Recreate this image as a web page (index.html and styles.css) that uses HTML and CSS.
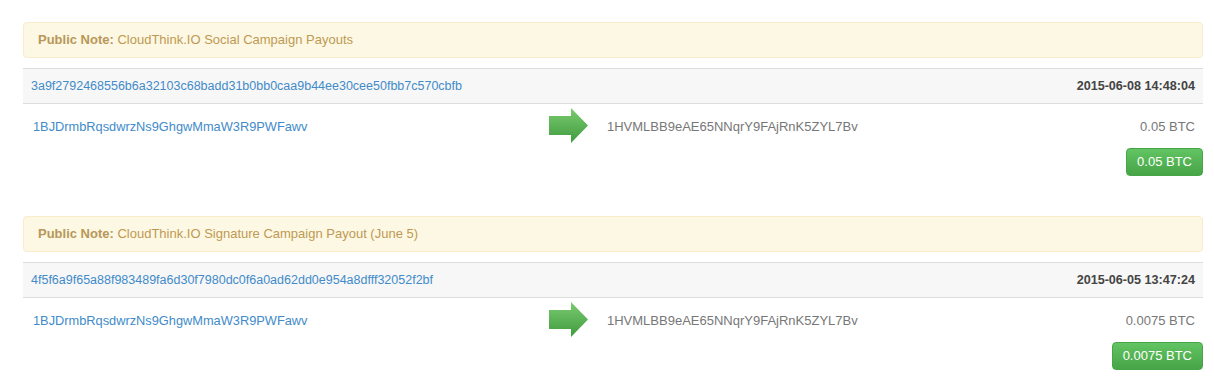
FILE: index.html
```html
<!DOCTYPE html>
<html>
<head>
<meta charset="utf-8">
<link rel="stylesheet" href="styles.css">
</head>
<body>
<div class="page">
  <div class="tx">
    <div class="note"><b>Public Note:</b> CloudThink.IO Social Campaign Payouts</div>
    <div class="tx-head">
      <a class="hash" href="#">3a9f2792468556b6a32103c68badd31b0bb0caa9b44ee30cee50fbb7c570cbfb</a>
      <span class="time">2015-06-08 14:48:04</span>
    </div>
    <div class="tx-row">
      <a class="from" href="#">1BJDrmbRqsdwrzNs9GhgwMmaW3R9PWFawv</a>
      <span class="arrow"><svg width="40" height="36" viewBox="0 0 40 36"><defs><linearGradient id="g1" x1="0" y1="0" x2="0" y2="1"><stop offset="0" stop-color="#7ccb6f"/><stop offset="1" stop-color="#3f9a3f"/></linearGradient></defs><polygon points="0,8 22,8 22,0 39,17.5 22,35 22,27 0,27" fill="url(#g1)"/></svg></span>
      <span class="to">1HVMLBB9eAE65NNqrY9FAjRnK5ZYL7Bv</span>
      <span class="amount">0.05 BTC</span>
    </div>
    <div class="tx-foot"><span class="btn-total">0.05 BTC</span></div>
  </div>
  <div class="tx">
    <div class="note"><b>Public Note:</b> CloudThink.IO Signature Campaign Payout (June 5)</div>
    <div class="tx-head">
      <a class="hash" href="#">4f5f6a9f65a88f983489fa6d30f7980dc0f6a0ad62dd0e954a8dfff32052f2bf</a>
      <span class="time">2015-06-05 13:47:24</span>
    </div>
    <div class="tx-row">
      <a class="from" href="#">1BJDrmbRqsdwrzNs9GhgwMmaW3R9PWFawv</a>
      <span class="arrow"><svg width="40" height="36" viewBox="0 0 40 36"><defs><linearGradient id="g2" x1="0" y1="0" x2="0" y2="1"><stop offset="0" stop-color="#7ccb6f"/><stop offset="1" stop-color="#3f9a3f"/></linearGradient></defs><polygon points="0,8 22,8 22,0 39,17.5 22,35 22,27 0,27" fill="url(#g2)"/></svg></span>
      <span class="to">1HVMLBB9eAE65NNqrY9FAjRnK5ZYL7Bv</span>
      <span class="amount">0.0075 BTC</span>
    </div>
    <div class="tx-foot"><span class="btn-total">0.0075 BTC</span></div>
  </div>
</div>
</body>
</html>
```
FILE: styles.css
```css
html, body {
  margin: 0;
  padding: 0;
  background: #fff;
  font-family: "Liberation Sans", Arial, sans-serif;
  font-size: 13px;
  color: #333;
}
.page {
  padding: 22px 11px 0 23px;
  display: flex;
  flex-direction: column;
  gap: 40px;
}
.tx {
  display: flex;
  flex-direction: column;
}
.note {
  height: 34px;
  line-height: 34px;
  padding: 0 14px;
  background: #fcf8e3;
  border: 1px solid #faebcc;
  border-radius: 4px;
  color: #c09853;
  font-size: 13px;
}
.note b {
  color: #b8975a;
}
.tx-head {
  margin-top: 10px;
  height: 34px;
  border-top: 1px solid #dddddd;
  border-bottom: 1px solid #dddddd;
  background: #f7f7f7;
  display: flex;
  align-items: center;
  justify-content: space-between;
  padding: 0 8px;
}
.hash {
  color: #428bca;
  text-decoration: none;
  font-size: 12.5px;
}
.time {
  font-weight: bold;
  font-size: 12.6px;
  color: #444;
}
.tx-row {
  display: grid;
  grid-template-columns: 518px 58px 1fr auto;
  align-items: center;
  height: 44px;
}
.from {
  padding-left: 10px;
  color: #428bca;
  text-decoration: none;
  font-size: 12.8px;
}
.arrow {
  padding-left: 8px;
  display: flex;
  align-items: center;
}
.arrow svg {
  display: block;
}
.to {
  padding-left: 8px;
  color: #777;
}
.amount {
  padding-right: 8px;
  color: #777;
}
.tx-foot {
  display: flex;
  justify-content: flex-end;
}
.btn-total {
  display: inline-block;
  height: 26px;
  line-height: 26px;
  padding: 0 10px;
  border: 1px solid #47a447;
  border-radius: 4px;
  background: linear-gradient(#62c462, #47a447);
  color: #fff;
  font-size: 13px;
}
```
